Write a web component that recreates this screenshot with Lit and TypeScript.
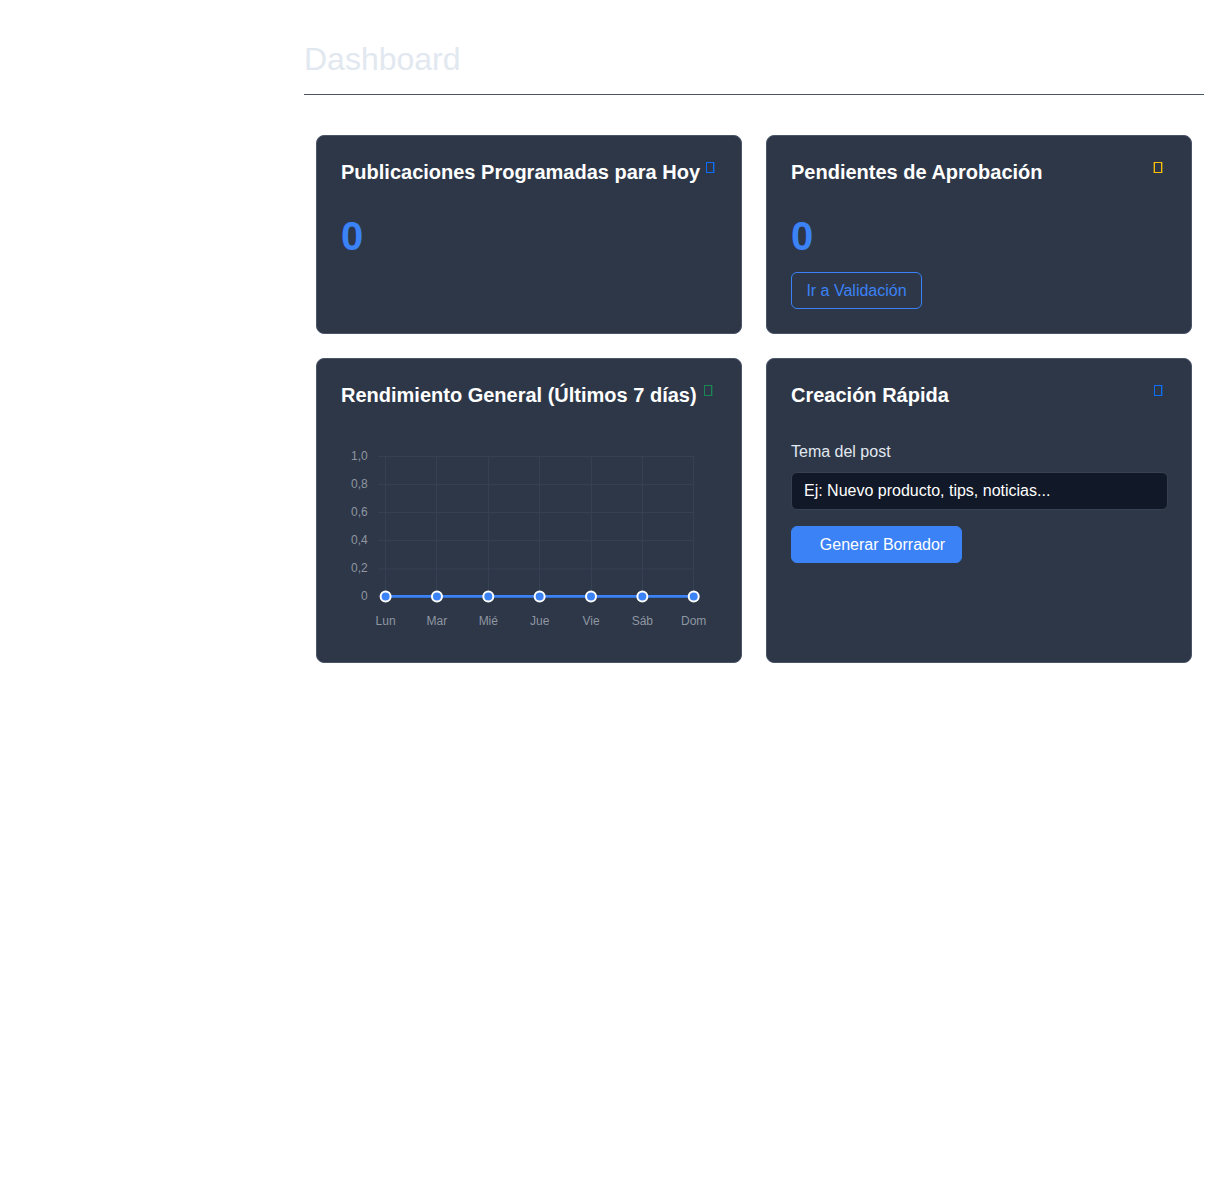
import { LitElement, html, css, svg } from "lit";
import { customElement, property } from "lit/decorators.js";

@customElement("card-mark")
class CardMark extends LitElement {
  @property() tone = "blue";

  static styles = css`
    :host { display: block; flex: none; width: 11px; height: 12px; }
    .glyph { display: block; }
    .box { fill: none; stroke-width: 1; }
    .edge { stroke-width: 1; opacity: 0.35; }
    .blue { stroke: #0d6efd; }
    .amber { stroke: #ffc107; }
    .green { stroke: #198754; }
    .sky { stroke: #0d6efd; }
  `;

  render() {
    return html`<svg class="glyph ${this.tone}" width="11" height="12" viewBox="0 0 11 12">
      <rect class="box" x="1.5" y="0.5" width="7" height="10"></rect>
      <path class="edge" d=${this.tone === "amber" ? "M0.5 0V11M9.5 0V11" : "M9.5 0V11"}></path>
    </svg>`;
  }
}

@customElement("performance-chart")
class PerformanceChart extends LitElement {
  static styles = css`
    :host { display: block; height: 204px; }
    .chart { display: block; }
    .grid { stroke: #354152; stroke-width: 1; }
    .line { stroke: #3b82f6; stroke-width: 3; }
    .shade { stroke: #356fce; stroke-width: 1; }
    .dot { fill: #3b82f6; stroke: #fff; stroke-width: 2; }
    .tick { fill: #8f96a1; font: 12px "Liberation Sans", Arial, sans-serif; }
    .end { text-anchor: end; }
    .mid { text-anchor: middle; }
  `;

  render() {
    const days = ["Lun", "Mar", "Mié", "Jue", "Vie", "Sáb", "Dom"];
    const levels = ["1,0", "0,8", "0,6", "0,4", "0,2", "0"];
    const px = (i: number) => 44.6 + i * 51.35;
    const py = (i: number) => 22.5 + i * 28;
    return html`<svg class="chart" width="376" height="204" viewBox="0 0 376 204">
      ${levels.map((t, i) => svg`
        <path class="grid" d="M37 ${py(i) + (i === 4 ? 0.5 : 0)}H353"></path>
        <text class="tick end" x="26.7" y=${py(i) + 3}>${t}</text>`)}
      ${days.map((_, i) => svg`<path class="grid" d="M${Math.floor(px(i)) + 0.5} 22V162"></path>`)}
      <path class="line" d="M44.6 162.5H352.7"></path>
      <path class="shade" d="M44.6 163.5H352.7"></path>
      ${days.map((t, i) => svg`
        <circle class="dot" cx=${px(i)} cy="162.5" r="5"></circle>
        <text class="tick mid" x=${px(i)} y="191">${t}</text>`)}
    </svg>`;
  }
}

@customElement("app-root")
class AppRoot extends LitElement {
  static styles = css`
    :host {
      display: block;
      box-sizing: border-box;
      min-height: 1190px;
      padding: 40px 24px 0 304px;
      background: #fff;
      font: 16px/24px "Liberation Sans", Arial, sans-serif;
    }
    * { box-sizing: border-box; }
    .heading {
      margin: 0 0 40px;
      height: 55px;
      border-bottom: 1px solid #4a5568;
      color: #e2e8f0;
      font-size: 32px;
      font-weight: 400;
      line-height: 38px;
    }
    .cards {
      display: grid;
      grid-template-columns: 1fr 1fr;
      grid-template-rows: 199px 305px;
      gap: 24px;
      padding: 0 12px;
    }
    .card {
      min-width: 0;
      padding: 24px;
      border: 1px solid #4a5568;
      border-radius: 8px;
      background: #2d3748;
      color: #e2e8f0;
    }
    .top { display: flex; justify-content: space-between; height: 24px; }
    .title {
      margin: 0;
      color: #fff;
      font-size: 20px;
      font-weight: 700;
      line-height: 24px;
      white-space: nowrap;
    }
    .mark { margin: 2px 3px 0 0; }
    .mark.near { margin-right: 1px; }
    .count {
      margin: 28px 0 12px;
      color: #3b82f6;
      font-size: 40px;
      font-weight: 700;
      line-height: 48px;
    }
    .chart { margin-top: 27px; }
    .btn {
      display: block;
      height: 37px;
      border: 1px solid #3b82f6;
      border-radius: 6px;
      font: inherit;
      line-height: 24px;
      white-space: nowrap;
    }
    .outline { width: 131px; padding: 0; background: transparent; color: #3b82f6; }
    .solid { width: 171px; padding: 0 0 0 12px; background: #3b82f6; color: #fff; }
    .label { display: block; margin: 33px 0 8px; }
    .field {
      display: block;
      width: 377px;
      height: 38px;
      margin-bottom: 16px;
      padding: 0 12px;
      border: 1px solid #374151;
      border-radius: 6px;
      background: #111827;
      color: #fff;
      font: inherit;
    }
    .field::placeholder { color: #fff; opacity: 1; }
  `;

  render() {
    return html`
      <h1 class="heading">Dashboard</h1>
      <main class="cards">
        <section class="card">
          <div class="top">
            <h2 class="title">Publicaciones Programadas para Hoy</h2>
            <card-mark class="mark near" tone="blue"></card-mark>
          </div>
          <div class="count">0</div>
        </section>
        <section class="card">
          <div class="top">
            <h2 class="title">Pendientes de Aprobación</h2>
            <card-mark class="mark" tone="amber"></card-mark>
          </div>
          <div class="count">0</div>
          <button class="btn outline">Ir a Validación</button>
        </section>
        <section class="card">
          <div class="top">
            <h2 class="title">Rendimiento General (Últimos 7 días)</h2>
            <card-mark class="mark" tone="green"></card-mark>
          </div>
          <performance-chart class="chart"></performance-chart>
        </section>
        <section class="card">
          <div class="top">
            <h2 class="title">Creación Rápida</h2>
            <card-mark class="mark" tone="sky"></card-mark>
          </div>
          <label class="label" for="topic">Tema del post</label>
          <input class="field" id="topic" placeholder="Ej: Nuevo producto, tips, noticias..." />
          <button class="btn solid">Generar Borrador</button>
        </section>
      </main>
    `;
  }
}
